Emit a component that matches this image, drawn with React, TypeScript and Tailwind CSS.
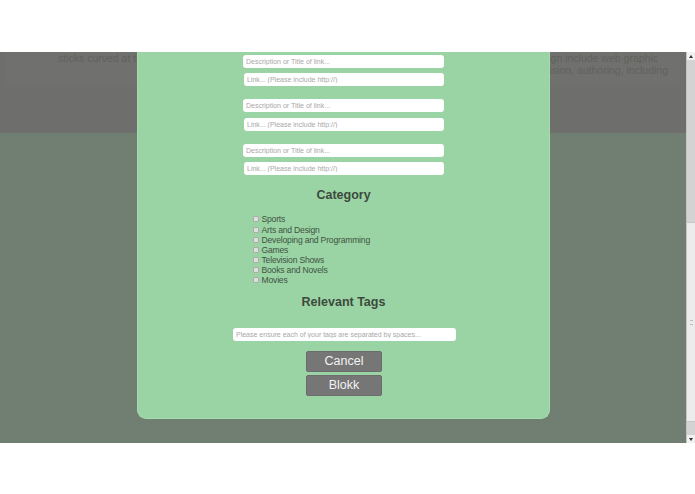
const links = [0, 1, 2];

const categories = [
  'Sports',
  'Arts and Design',
  'Developing and Programming',
  'Games',
  'Television Shows',
  'Books and Novels',
  'Movies',
];

const inputClass =
  'block h-[13px] bg-white rounded-[3px] px-[3px] text-[7px] text-[#444] placeholder:text-[#a8a8a8] outline-none border-0';

function LinkFields() {
  return (
    <div className="flex flex-col gap-[13.3px]">
      {links.map((i) => (
        <div key={i} className="flex flex-col gap-[5.3px]">
          <input className={`${inputClass} w-[201px] ml-[105px]`} placeholder="Description or Title of link..." />
          <input className={`${inputClass} w-[200px] ml-[106px]`} placeholder="Link... (Please include http://)" />
        </div>
      ))}
    </div>
  );
}

function Modal() {
  return (
    <div className="absolute left-[137px] top-0 w-[413px] h-[367px] bg-[#9bd4a4] rounded-b-[9px] border-x border-b border-[#a6dbae] pt-[2.7px] flex flex-col">
      <LinkFields />

      <h2 className="mt-[13px] text-center text-[12.5px] leading-[14px] font-bold text-[#3b4a3e]">Category</h2>

      <ul className="mt-[12.2px] pl-[115px] flex flex-col">
        {categories.map((c) => (
          <li key={c} className="flex items-center h-[10.17px] text-[8.6px] leading-[10.17px] tracking-[-0.2px] text-[#3f5243]">
            <input
              type="checkbox"
              className="appearance-none w-[6px] h-[6px] mr-[2.5px] border border-[#a9aea9] bg-[#dedede] rounded-[1px]"
            />
            <span>{c}</span>
          </li>
        ))}
      </ul>

      <h2 className="mt-[10px] text-center text-[12.5px] leading-[14.5px] font-bold text-[#3b4a3e]">Relevant Tags</h2>

      <input
        className={`${inputClass} mt-[18.3px] ml-[95px] w-[223px] h-[13.6px] text-[6.6px]`}
        placeholder="Please ensure each of your tags are separated by spaces..."
      />

      <div className="mt-[10px] ml-[168px] flex flex-col gap-[3px]">
        <button className="w-[76px] h-[21px] bg-[#767676] rounded-[2px] text-[12.5px] text-[#f2f2f2] border border-[#6c6c6c]">Cancel</button>
        <button className="w-[76px] h-[21px] bg-[#767676] rounded-[2px] text-[12.5px] text-[#f2f2f2] border border-[#6c6c6c]">Blokk</button>
      </div>
    </div>
  );
}

function Scrollbar() {
  return (
    <div className="w-[9px] bg-[#d3d3d3] flex flex-col border-l border-[#c4c4c4]">
      <div className="h-[8px] bg-[#f1f1f1] flex items-center justify-center">
        <span className="w-0 h-0 border-x-[2px] border-x-transparent border-b-[3px] border-b-[#333]" />
      </div>
      <div className="h-[162px]" />
      <div className="h-[200px] bg-[#ececec] border-y border-[#c8c8c8] flex items-center justify-center">
        <span className="w-[3px] h-[5px] border-y border-[#bdbdbd]" />
      </div>
      <div className="flex-1" />
      <div className="h-[8px] bg-[#f1f1f1] flex items-center justify-center">
        <span className="w-0 h-0 border-x-[2px] border-x-transparent border-t-[3px] border-t-[#333]" />
      </div>
    </div>
  );
}

export default function App() {
  return (
    <div className="w-[695px] h-[494px] bg-white flex flex-col font-['Liberation_Sans',Arial,sans-serif]">
      <div className="h-[52px] shrink-0" />
      <div className="h-[391px] shrink-0 flex">
        <div className="relative flex-1 overflow-hidden flex flex-col">
          <div className="h-[81px] bg-[#6e6f6c]">
            <div className="mx-[6px] h-[32px] bg-[#70716e] pt-[1px] text-[10.5px] leading-[11.5px] text-[#60615e]">
              <div className="flex justify-between pl-[52px] pr-[22px]">
                <span>sticks curved at the tip and</span>
                <span>sign include web graphic</span>
              </div>
              <div className="flex justify-end pr-[12px]">
                <span>ession, authoring, including</span>
              </div>
            </div>
          </div>
          <div className="flex-1 bg-[#707f72]" />
          <Modal />
        </div>
        <Scrollbar />
      </div>
      <div className="flex-1" />
    </div>
  );
}
